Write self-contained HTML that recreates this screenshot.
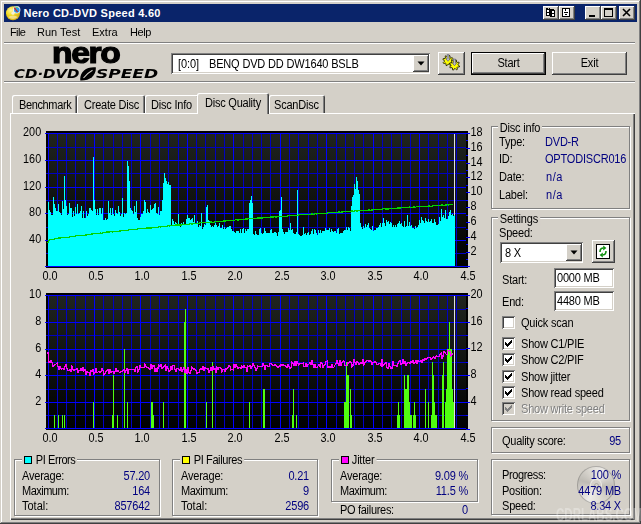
<!DOCTYPE html>
<html><head><meta charset="utf-8"><title>Nero CD-DVD Speed 4.60</title>
<style>
html,body{margin:0;padding:0;}
body{width:641px;height:524px;overflow:hidden;opacity:0.999;background:#d4d0c8;position:relative;font-family:"Liberation Sans",sans-serif;font-size:11px;color:#000;}
.a{position:absolute;}
.t{position:absolute;white-space:nowrap;line-height:13px;font-size:12px;letter-spacing:-0.22px;transform:scaleX(0.9167);transform-origin:0 0;}
.t.r{transform-origin:100% 0;}
.t.c{transform-origin:50% 0;}
.t.m{font-size:11px;transform:none;}
.v{color:#000080;}
.r{text-align:right;}
.raised{box-shadow:inset -1px -1px #404040,inset 1px 1px #fff,inset -2px -2px #808080,inset 2px 2px #d4d0c8;background:#d4d0c8;}
.sunken{box-shadow:inset 1px 1px #808080,inset -1px -1px #fff,inset 2px 2px #404040,inset -2px -2px #d4d0c8;background:#fff;}
.gb{position:absolute;border:1px solid #808080;box-shadow:1px 1px 0 #fff,inset 1px 1px 0 #fff;box-sizing:border-box;}
.lg{position:absolute;background:#d4d0c8;white-space:nowrap;line-height:13px;font-size:12px;letter-spacing:-0.22px;transform:scaleX(0.9167);transform-origin:0 0;}
.sep{position:absolute;height:1px;background:#808080;box-shadow:0 1px 0 #fff;}
.cb{position:absolute;width:13px;height:13px;box-shadow:inset 1px 1px #808080,inset -1px -1px #fff,inset 2px 2px #404040,inset -2px -2px #d4d0c8;background:#fff;}
.sq{position:absolute;width:8px;height:8px;border:1px solid #000;box-sizing:border-box;}
.capbtn{position:absolute;top:6px;width:16px;height:14px;}
.tab{position:absolute;top:95px;height:18px;background:#d4d0c8;border-radius:2px 2px 0 0;box-shadow:inset 1px 1px #fff,inset -1px 0 #404040,inset -2px 0 #808080;}
</style></head><body>
<!-- window frame -->
<div class="a" style="left:0;top:0;width:641px;height:524px;box-shadow:inset -1px -1px #404040,inset 1px 1px #d4d0c8,inset -2px -2px #808080,inset 2px 2px #fff;"></div>
<!-- title bar -->
<div class="a" style="left:4px;top:4px;width:633px;height:18px;background:#0a246a;"></div>
<svg class="a" style="left:5px;top:4px" width="18" height="18" viewBox="0 0 18 18"><defs><radialGradient id="gd" cx="0.35" cy="0.3" r="0.8"><stop offset="0" stop-color="#fff8a0"/><stop offset="0.45" stop-color="#f0d820"/><stop offset="1" stop-color="#c8a010"/></radialGradient></defs><circle cx="8" cy="9.2" r="7" fill="url(#gd)"/><path d="M3 13 Q8 10 13 13 Q8 17 3 13Z" fill="#f8e8b0" opacity="0.7"/><circle cx="8" cy="9.2" r="1.6" fill="#f4f0d8"/><circle cx="11.6" cy="5.8" r="3.8" fill="#f0f0f0"/><circle cx="11.8" cy="6" r="2.8" fill="#2898e8"/><path d="M9.2 3.6 L12.6 8" stroke="#d82010" stroke-width="1.2"/><path d="M10.2 3 L12.8 3.2" stroke="#60c040" stroke-width="1"/></svg>
<div class="t m" style="left:23.5px;top:7px;color:#fff;font-weight:bold;letter-spacing:0.26px;">Nero CD-DVD Speed 4.60</div>
<div class="capbtn raised" style="left:543px"></div>
<div class="capbtn raised" style="left:559px"></div>
<div class="capbtn raised" style="left:585px"></div>
<div class="capbtn raised" style="left:601px"></div>
<div class="capbtn raised" style="left:619px"></div>
<svg class="a" style="left:543px;top:6px" width="92" height="14" viewBox="0 0 92 14" shape-rendering="crispEdges"><rect x="3" y="2" width="4" height="8" fill="#000"/><rect x="5" y="2" width="1" height="1" fill="#d4d0c8"/><rect x="4" y="4" width="2" height="2" fill="#fff"/><rect x="4" y="7" width="2" height="2" fill="#fff"/><rect x="7" y="3" width="5" height="8" fill="#000"/><rect x="8" y="3" width="1" height="1" fill="#000"/><rect x="9" y="5" width="2" height="2" fill="#fff"/><rect x="9" y="8" width="2" height="2" fill="#fff"/><rect x="11" y="3" width="1" height="1" fill="#d4d0c8"/><rect x="19" y="2" width="8" height="9" fill="#000"/><rect x="20" y="3" width="1" height="7" fill="#fff"/><rect x="25" y="3" width="1" height="7" fill="#fff"/><rect x="21" y="3" width="4" height="3" fill="#fff"/><rect x="22" y="3" width="1" height="2" fill="#000"/><rect x="21" y="7" width="4" height="3" fill="#fff"/><rect x="22" y="8" width="2" height="1" fill="#000"/><rect x="46" y="9" width="6" height="2" fill="#000"/><rect x="61.5" y="3.5" width="8" height="7" fill="none" stroke="#000"/><rect x="61" y="2" width="9" height="2" fill="#000"/><path d="M80 3 L87 10 M87 3 L80 10" stroke="#000" stroke-width="1.6" shape-rendering="auto"/></svg>
<!-- menu -->
<div class="t m" style="left:10px;top:26px;letter-spacing:-0.6px;">File</div>
<div class="t m" style="left:37px;top:26px;letter-spacing:0px;">Run Test</div>
<div class="t m" style="left:92px;top:26px;letter-spacing:0px;">Extra</div>
<div class="t m" style="left:130px;top:26px;letter-spacing:-0.4px;">Help</div>
<div class="sep" style="left:4px;top:42px;width:631px;"></div>
<!-- logo -->
<div class="a" id="nero" style="left:52px;top:35px;font-size:29px;line-height:36px;font-weight:bold;letter-spacing:-1.2px;-webkit-text-stroke:1.2px #000;white-space:nowrap;transform-origin:0 0;transform:scaleX(1.16);">nero</div>
<div class="a" id="cdd" style="left:14px;top:68px;font-family:'DejaVu Sans',sans-serif;font-weight:bold;font-style:oblique;font-size:11.5px;line-height:12px;white-space:nowrap;transform-origin:0 0;transform:scaleX(1.3);letter-spacing:0px;">CD·DVD</div>
<svg class="a" style="left:80px;top:67px" width="16" height="14" viewBox="0 0 16 14"><path d="M0.3 13.5 C-0.5 5 6 -0.5 15.8 0.3 C16.5 8 10 14 0.3 13.5Z" fill="#000"/><path d="M3.5 11 C6 8 9 5 12.5 3.2" stroke="#d4d0c8" stroke-width="1.1" fill="none"/></svg>
<div class="a" id="spd" style="left:96px;top:68px;font-family:'DejaVu Sans',sans-serif;font-weight:bold;font-style:oblique;font-size:11.5px;line-height:12px;white-space:nowrap;transform-origin:0 0;transform:scaleX(1.48);letter-spacing:0px;">SPEED</div>
<!-- toolbar -->
<div class="a sunken" style="left:171px;top:53px;width:259px;height:21px;"></div>
<div class="t" style="left:178px;top:58px;letter-spacing:-0.1px;">[0:0]</div><div class="t" style="left:208.5px;top:58px;letter-spacing:-0.18px;">BENQ DVD DD DW1640 BSLB</div>
<div class="a raised" style="left:413px;top:55px;width:16px;height:17px;"></div>
<svg class="a" style="left:417px;top:61px" width="8" height="5"><path d="M0.5 0.5 L7.5 0.5 L4 4.5Z" fill="#000"/></svg>
<div class="a raised" style="left:438px;top:52px;width:27px;height:23px;"></div>
<svg class="a" style="left:438px;top:52px" width="27" height="23" viewBox="0 0 27 23"><polygon points="15.10,9.63 14.80,10.61 12.99,10.61 12.54,11.15 12.87,12.93 11.97,13.41 10.69,12.13 9.99,12.20 8.97,13.70 7.99,13.40 7.99,11.59 7.45,11.14 5.67,11.47 5.19,10.57 6.47,9.29 6.40,8.59 4.90,7.57 5.20,6.59 7.01,6.59 7.46,6.05 7.13,4.27 8.03,3.79 9.31,5.07 10.01,5.00 11.03,3.50 12.01,3.80 12.01,5.61 12.55,6.06 14.33,5.73 14.81,6.63 13.53,7.91 13.60,8.61" fill="#ffff00" stroke="#202000" stroke-width="0.9" stroke-linejoin="round"/><path d="M9.0 2.7 v4 h-1.2 l2.2 2.6 l2.2 -2.6 h-1.2 v-4z" fill="#b8b8c8" stroke="#505060" stroke-width="0.6"/><polygon points="21.60,14.03 21.30,15.01 19.49,15.01 19.04,15.55 19.37,17.33 18.47,17.81 17.19,16.53 16.49,16.60 15.47,18.10 14.49,17.80 14.49,15.99 13.95,15.54 12.17,15.87 11.69,14.97 12.97,13.69 12.90,12.99 11.40,11.97 11.70,10.99 13.51,10.99 13.96,10.45 13.63,8.67 14.53,8.19 15.81,9.47 16.51,9.40 17.53,7.90 18.51,8.20 18.51,10.01 19.05,10.46 20.83,10.13 21.31,11.03 20.03,12.31 20.10,13.01" fill="#ffff00" stroke="#202000" stroke-width="0.9" stroke-linejoin="round"/><path d="M15.5 7.1 v4 h-1.2 l2.2 2.6 l2.2 -2.6 h-1.2 v-4z" fill="#b8b8c8" stroke="#505060" stroke-width="0.6"/></svg>
<div class="a" style="left:471px;top:52px;width:75px;height:23px;background:#000;"></div>
<div class="a raised" style="left:472px;top:53px;width:73px;height:21px;"></div>
<div class="t c" style="left:471px;top:57px;width:75px;text-align:center;">Start</div>
<div class="a raised" style="left:552px;top:52px;width:75px;height:23px;"></div>
<div class="t c" style="left:552px;top:57px;width:75px;text-align:center;">Exit</div>
<div class="sep" style="left:4px;top:81px;width:631px;"></div>
<!-- tab panel -->
<div class="a" style="left:10px;top:113px;width:625px;height:407px;box-shadow:inset 1px 1px #fff,inset -1px -1px #404040,inset -2px -2px #808080;"></div>
<!-- tabs -->
<div class="tab" style="left:12px;width:65px;"></div><div class="t" style="left:19px;top:99px;letter-spacing:-0.4px;">Benchmark</div>
<div class="tab" style="left:77px;width:68px;"></div><div class="t" style="left:84px;top:99px;letter-spacing:-0.25px;">Create Disc</div>
<div class="tab" style="left:145px;width:54px;"></div><div class="t" style="left:151px;top:99px;">Disc Info</div>
<div class="tab" style="left:269px;width:56px;"></div><div class="t" style="left:274px;top:99px;">ScanDisc</div>
<div class="tab" style="left:197px;top:93px;width:72px;height:21px;"></div><div class="t" style="left:205px;top:97px;letter-spacing:-0.25px;">Disc Quality</div>
<svg id="chart" width="641" height="524" viewBox="0 0 641 524" style="position:absolute;left:0;top:0">
<defs><linearGradient id="bg" x1="0" y1="0" x2="0" y2="1"><stop offset="0" stop-color="#20241f"/><stop offset="0.5" stop-color="#101210"/><stop offset="1" stop-color="#000"/></linearGradient></defs>
<g shape-rendering="crispEdges">
<rect x="46" y="131" width="422" height="137" fill="#000"/>
<rect x="46" y="293" width="422" height="137" fill="#000"/>
<rect x="48" y="133" width="418" height="133" fill="url(#bg)"/>
<rect x="48" y="295" width="418" height="133" fill="url(#bg)"/>
<g fill="#0000c0"><rect x="57" y="133" width="1" height="133"/><rect x="66" y="133" width="1" height="133"/><rect x="75" y="133" width="1" height="133"/><rect x="85" y="133" width="1" height="133"/><rect x="103" y="133" width="1" height="133"/><rect x="113" y="133" width="1" height="133"/><rect x="122" y="133" width="1" height="133"/><rect x="131" y="133" width="1" height="133"/><rect x="150" y="133" width="1" height="133"/><rect x="159" y="133" width="1" height="133"/><rect x="168" y="133" width="1" height="133"/><rect x="178" y="133" width="1" height="133"/><rect x="196" y="133" width="1" height="133"/><rect x="205" y="133" width="1" height="133"/><rect x="215" y="133" width="1" height="133"/><rect x="224" y="133" width="1" height="133"/><rect x="243" y="133" width="1" height="133"/><rect x="252" y="133" width="1" height="133"/><rect x="261" y="133" width="1" height="133"/><rect x="270" y="133" width="1" height="133"/><rect x="289" y="133" width="1" height="133"/><rect x="298" y="133" width="1" height="133"/><rect x="308" y="133" width="1" height="133"/><rect x="317" y="133" width="1" height="133"/><rect x="336" y="133" width="1" height="133"/><rect x="345" y="133" width="1" height="133"/><rect x="354" y="133" width="1" height="133"/><rect x="363" y="133" width="1" height="133"/><rect x="382" y="133" width="1" height="133"/><rect x="391" y="133" width="1" height="133"/><rect x="401" y="133" width="1" height="133"/><rect x="410" y="133" width="1" height="133"/><rect x="428" y="133" width="1" height="133"/><rect x="438" y="133" width="1" height="133"/><rect x="447" y="133" width="1" height="133"/><rect x="456" y="133" width="1" height="133"/><rect x="46" y="147" width="420" height="1"/><rect x="46" y="173" width="420" height="1"/><rect x="46" y="200" width="420" height="1"/><rect x="46" y="227" width="420" height="1"/><rect x="46" y="253" width="420" height="1"/><rect x="57" y="295" width="1" height="133"/><rect x="66" y="295" width="1" height="133"/><rect x="75" y="295" width="1" height="133"/><rect x="85" y="295" width="1" height="133"/><rect x="103" y="295" width="1" height="133"/><rect x="113" y="295" width="1" height="133"/><rect x="122" y="295" width="1" height="133"/><rect x="131" y="295" width="1" height="133"/><rect x="150" y="295" width="1" height="133"/><rect x="159" y="295" width="1" height="133"/><rect x="168" y="295" width="1" height="133"/><rect x="178" y="295" width="1" height="133"/><rect x="196" y="295" width="1" height="133"/><rect x="205" y="295" width="1" height="133"/><rect x="215" y="295" width="1" height="133"/><rect x="224" y="295" width="1" height="133"/><rect x="243" y="295" width="1" height="133"/><rect x="252" y="295" width="1" height="133"/><rect x="261" y="295" width="1" height="133"/><rect x="270" y="295" width="1" height="133"/><rect x="289" y="295" width="1" height="133"/><rect x="298" y="295" width="1" height="133"/><rect x="308" y="295" width="1" height="133"/><rect x="317" y="295" width="1" height="133"/><rect x="336" y="295" width="1" height="133"/><rect x="345" y="295" width="1" height="133"/><rect x="354" y="295" width="1" height="133"/><rect x="363" y="295" width="1" height="133"/><rect x="382" y="295" width="1" height="133"/><rect x="391" y="295" width="1" height="133"/><rect x="401" y="295" width="1" height="133"/><rect x="410" y="295" width="1" height="133"/><rect x="428" y="295" width="1" height="133"/><rect x="438" y="295" width="1" height="133"/><rect x="447" y="295" width="1" height="133"/><rect x="456" y="295" width="1" height="133"/><rect x="46" y="309" width="420" height="1"/><rect x="46" y="335" width="420" height="1"/><rect x="46" y="362" width="420" height="1"/><rect x="46" y="389" width="420" height="1"/><rect x="46" y="415" width="420" height="1"/></g>
<g fill="#0000ff"><rect x="48" y="133" width="1" height="133"/><rect x="94" y="133" width="1" height="133"/><rect x="140" y="133" width="1" height="133"/><rect x="187" y="133" width="1" height="133"/><rect x="233" y="133" width="1" height="133"/><rect x="280" y="133" width="1" height="133"/><rect x="326" y="133" width="1" height="133"/><rect x="373" y="133" width="1" height="133"/><rect x="419" y="133" width="1" height="133"/><rect x="45" y="133" width="421" height="1"/><rect x="45" y="160" width="421" height="1"/><rect x="45" y="187" width="421" height="1"/><rect x="45" y="213" width="421" height="1"/><rect x="45" y="240" width="421" height="1"/><rect x="45" y="266" width="421" height="1"/><rect x="48" y="295" width="1" height="133"/><rect x="94" y="295" width="1" height="133"/><rect x="140" y="295" width="1" height="133"/><rect x="187" y="295" width="1" height="133"/><rect x="233" y="295" width="1" height="133"/><rect x="280" y="295" width="1" height="133"/><rect x="326" y="295" width="1" height="133"/><rect x="373" y="295" width="1" height="133"/><rect x="419" y="295" width="1" height="133"/><rect x="45" y="295" width="421" height="1"/><rect x="45" y="322" width="421" height="1"/><rect x="45" y="349" width="421" height="1"/><rect x="45" y="375" width="421" height="1"/><rect x="45" y="402" width="421" height="1"/><rect x="45" y="428" width="421" height="1"/><rect x="466" y="266" width="4" height="1"/><rect x="466" y="259" width="2" height="1"/><rect x="466" y="252" width="4" height="1"/><rect x="466" y="244" width="2" height="1"/><rect x="466" y="237" width="4" height="1"/><rect x="466" y="229" width="2" height="1"/><rect x="466" y="222" width="4" height="1"/><rect x="466" y="215" width="2" height="1"/><rect x="466" y="207" width="4" height="1"/><rect x="466" y="200" width="2" height="1"/><rect x="466" y="192" width="4" height="1"/><rect x="466" y="185" width="2" height="1"/><rect x="466" y="177" width="4" height="1"/><rect x="466" y="170" width="2" height="1"/><rect x="466" y="163" width="4" height="1"/><rect x="466" y="155" width="2" height="1"/><rect x="466" y="148" width="4" height="1"/><rect x="466" y="140" width="2" height="1"/><rect x="466" y="133" width="4" height="1"/><rect x="466" y="429" width="4" height="1"/><rect x="466" y="415" width="2" height="1"/><rect x="466" y="402" width="4" height="1"/><rect x="466" y="388" width="2" height="1"/><rect x="466" y="375" width="4" height="1"/><rect x="466" y="362" width="2" height="1"/><rect x="466" y="348" width="4" height="1"/><rect x="466" y="335" width="2" height="1"/><rect x="466" y="322" width="4" height="1"/><rect x="466" y="308" width="2" height="1"/><rect x="466" y="295" width="4" height="1"/></g>
<rect x="454" y="134" width="1" height="132" fill="#e0e0e0"/>
<rect x="454" y="296" width="1" height="132" fill="#e0e0e0"/>
<g fill="#00ffff"><rect x="48" y="202" width="1" height="64"/><rect x="49" y="210" width="1" height="56"/><rect x="50" y="212" width="1" height="54"/><rect x="51" y="215" width="1" height="51"/><rect x="52" y="215" width="1" height="51"/><rect x="53" y="197" width="1" height="69"/><rect x="54" y="204" width="1" height="62"/><rect x="55" y="208" width="1" height="58"/><rect x="56" y="211" width="1" height="55"/><rect x="57" y="211" width="1" height="55"/><rect x="58" y="204" width="1" height="62"/><rect x="59" y="212" width="1" height="54"/><rect x="60" y="213" width="1" height="53"/><rect x="61" y="215" width="1" height="51"/><rect x="62" y="201" width="1" height="65"/><rect x="63" y="209" width="1" height="57"/><rect x="64" y="176" width="1" height="90"/><rect x="65" y="200" width="1" height="66"/><rect x="66" y="206" width="1" height="60"/><rect x="67" y="215" width="1" height="51"/><rect x="68" y="214" width="1" height="52"/><rect x="69" y="203" width="1" height="63"/><rect x="70" y="208" width="1" height="58"/><rect x="71" y="208" width="1" height="58"/><rect x="72" y="217" width="1" height="49"/><rect x="73" y="211" width="1" height="55"/><rect x="74" y="216" width="1" height="50"/><rect x="75" y="207" width="1" height="59"/><rect x="76" y="214" width="1" height="52"/><rect x="77" y="204" width="1" height="62"/><rect x="78" y="214" width="1" height="52"/><rect x="79" y="213" width="1" height="53"/><rect x="80" y="211" width="1" height="55"/><rect x="81" y="206" width="1" height="60"/><rect x="82" y="218" width="1" height="48"/><rect x="83" y="211" width="1" height="55"/><rect x="84" y="218" width="1" height="48"/><rect x="85" y="218" width="1" height="48"/><rect x="86" y="211" width="1" height="55"/><rect x="87" y="216" width="1" height="50"/><rect x="88" y="214" width="1" height="52"/><rect x="89" y="208" width="1" height="58"/><rect x="90" y="208" width="1" height="58"/><rect x="91" y="210" width="1" height="56"/><rect x="92" y="211" width="1" height="55"/><rect x="93" y="157" width="1" height="109"/><rect x="94" y="200" width="1" height="66"/><rect x="95" y="209" width="1" height="57"/><rect x="96" y="215" width="1" height="51"/><rect x="97" y="209" width="1" height="57"/><rect x="98" y="215" width="1" height="51"/><rect x="99" y="208" width="1" height="58"/><rect x="100" y="208" width="1" height="58"/><rect x="101" y="214" width="1" height="52"/><rect x="102" y="208" width="1" height="58"/><rect x="103" y="220" width="1" height="46"/><rect x="104" y="220" width="1" height="46"/><rect x="105" y="218" width="1" height="48"/><rect x="106" y="220" width="1" height="46"/><rect x="107" y="219" width="1" height="47"/><rect x="108" y="201" width="1" height="65"/><rect x="109" y="213" width="1" height="53"/><rect x="110" y="208" width="1" height="58"/><rect x="111" y="215" width="1" height="51"/><rect x="112" y="208" width="1" height="58"/><rect x="113" y="214" width="1" height="52"/><rect x="114" y="216" width="1" height="50"/><rect x="115" y="210" width="1" height="56"/><rect x="116" y="213" width="1" height="53"/><rect x="117" y="214" width="1" height="52"/><rect x="118" y="206" width="1" height="60"/><rect x="119" y="212" width="1" height="54"/><rect x="120" y="216" width="1" height="50"/><rect x="121" y="214" width="1" height="52"/><rect x="122" y="198" width="1" height="68"/><rect x="123" y="217" width="1" height="49"/><rect x="124" y="213" width="1" height="53"/><rect x="125" y="214" width="1" height="52"/><rect x="126" y="213" width="1" height="53"/><rect x="127" y="161" width="1" height="105"/><rect x="128" y="166" width="1" height="100"/><rect x="129" y="181" width="1" height="85"/><rect x="130" y="208" width="1" height="58"/><rect x="131" y="210" width="1" height="56"/><rect x="132" y="211" width="1" height="55"/><rect x="133" y="214" width="1" height="52"/><rect x="134" y="206" width="1" height="60"/><rect x="135" y="212" width="1" height="54"/><rect x="136" y="201" width="1" height="65"/><rect x="137" y="218" width="1" height="48"/><rect x="138" y="220" width="1" height="46"/><rect x="139" y="220" width="1" height="46"/><rect x="140" y="217" width="1" height="49"/><rect x="141" y="214" width="1" height="52"/><rect x="142" y="214" width="1" height="52"/><rect x="143" y="211" width="1" height="55"/><rect x="144" y="200" width="1" height="66"/><rect x="145" y="202" width="1" height="64"/><rect x="146" y="213" width="1" height="53"/><rect x="147" y="209" width="1" height="57"/><rect x="148" y="212" width="1" height="54"/><rect x="149" y="213" width="1" height="53"/><rect x="150" y="205" width="1" height="61"/><rect x="151" y="210" width="1" height="56"/><rect x="152" y="209" width="1" height="57"/><rect x="153" y="208" width="1" height="58"/><rect x="154" y="204" width="1" height="62"/><rect x="155" y="203" width="1" height="63"/><rect x="156" y="213" width="1" height="53"/><rect x="157" y="214" width="1" height="52"/><rect x="158" y="207" width="1" height="59"/><rect x="159" y="215" width="1" height="51"/><rect x="160" y="211" width="1" height="55"/><rect x="161" y="211" width="1" height="55"/><rect x="162" y="200" width="1" height="66"/><rect x="163" y="183" width="1" height="83"/><rect x="164" y="173" width="1" height="93"/><rect x="165" y="178" width="1" height="88"/><rect x="166" y="181" width="1" height="85"/><rect x="167" y="184" width="1" height="82"/><rect x="168" y="182" width="1" height="84"/><rect x="169" y="185" width="1" height="81"/><rect x="170" y="185" width="1" height="81"/><rect x="171" y="225" width="1" height="41"/><rect x="172" y="219" width="1" height="47"/><rect x="173" y="221" width="1" height="45"/><rect x="174" y="224" width="1" height="42"/><rect x="175" y="222" width="1" height="44"/><rect x="176" y="223" width="1" height="43"/><rect x="177" y="226" width="1" height="40"/><rect x="178" y="214" width="1" height="52"/><rect x="179" y="225" width="1" height="41"/><rect x="180" y="227" width="1" height="39"/><rect x="181" y="223" width="1" height="43"/><rect x="182" y="225" width="1" height="41"/><rect x="183" y="222" width="1" height="44"/><rect x="184" y="224" width="1" height="42"/><rect x="185" y="224" width="1" height="42"/><rect x="186" y="219" width="1" height="47"/><rect x="187" y="215" width="1" height="51"/><rect x="188" y="218" width="1" height="48"/><rect x="189" y="218" width="1" height="48"/><rect x="190" y="220" width="1" height="46"/><rect x="191" y="219" width="1" height="47"/><rect x="192" y="218" width="1" height="48"/><rect x="193" y="222" width="1" height="44"/><rect x="194" y="215" width="1" height="51"/><rect x="195" y="224" width="1" height="42"/><rect x="196" y="224" width="1" height="42"/><rect x="197" y="221" width="1" height="45"/><rect x="198" y="227" width="1" height="39"/><rect x="199" y="225" width="1" height="41"/><rect x="200" y="226" width="1" height="40"/><rect x="201" y="213" width="1" height="53"/><rect x="202" y="229" width="1" height="37"/><rect x="203" y="227" width="1" height="39"/><rect x="204" y="224" width="1" height="42"/><rect x="205" y="225" width="1" height="41"/><rect x="206" y="207" width="1" height="59"/><rect x="207" y="205" width="1" height="61"/><rect x="208" y="220" width="1" height="46"/><rect x="209" y="221" width="1" height="45"/><rect x="210" y="225" width="1" height="41"/><rect x="211" y="227" width="1" height="39"/><rect x="212" y="226" width="1" height="40"/><rect x="213" y="227" width="1" height="39"/><rect x="214" y="225" width="1" height="41"/><rect x="215" y="223" width="1" height="43"/><rect x="216" y="225" width="1" height="41"/><rect x="217" y="227" width="1" height="39"/><rect x="218" y="226" width="1" height="40"/><rect x="219" y="223" width="1" height="43"/><rect x="220" y="228" width="1" height="38"/><rect x="221" y="228" width="1" height="38"/><rect x="222" y="225" width="1" height="41"/><rect x="223" y="229" width="1" height="37"/><rect x="224" y="227" width="1" height="39"/><rect x="225" y="229" width="1" height="37"/><rect x="226" y="228" width="1" height="38"/><rect x="227" y="227" width="1" height="39"/><rect x="228" y="227" width="1" height="39"/><rect x="229" y="226" width="1" height="40"/><rect x="230" y="226" width="1" height="40"/><rect x="231" y="229" width="1" height="37"/><rect x="232" y="231" width="1" height="35"/><rect x="233" y="231" width="1" height="35"/><rect x="234" y="232" width="1" height="34"/><rect x="235" y="233" width="1" height="33"/><rect x="236" y="231" width="1" height="35"/><rect x="237" y="231" width="1" height="35"/><rect x="238" y="231" width="1" height="35"/><rect x="239" y="233" width="1" height="33"/><rect x="240" y="229" width="1" height="37"/><rect x="241" y="233" width="1" height="33"/><rect x="242" y="229" width="1" height="37"/><rect x="243" y="228" width="1" height="38"/><rect x="244" y="233" width="1" height="33"/><rect x="245" y="229" width="1" height="37"/><rect x="246" y="231" width="1" height="35"/><rect x="247" y="229" width="1" height="37"/><rect x="248" y="229" width="1" height="37"/><rect x="249" y="203" width="1" height="63"/><rect x="250" y="200" width="1" height="66"/><rect x="251" y="196" width="1" height="70"/><rect x="252" y="203" width="1" height="63"/><rect x="253" y="234" width="1" height="32"/><rect x="254" y="235" width="1" height="31"/><rect x="255" y="231" width="1" height="35"/><rect x="256" y="234" width="1" height="32"/><rect x="257" y="235" width="1" height="31"/><rect x="258" y="235" width="1" height="31"/><rect x="259" y="229" width="1" height="37"/><rect x="260" y="228" width="1" height="38"/><rect x="261" y="233" width="1" height="33"/><rect x="262" y="234" width="1" height="32"/><rect x="263" y="233" width="1" height="33"/><rect x="264" y="228" width="1" height="38"/><rect x="265" y="231" width="1" height="35"/><rect x="266" y="233" width="1" height="33"/><rect x="267" y="233" width="1" height="33"/><rect x="268" y="233" width="1" height="33"/><rect x="269" y="233" width="1" height="33"/><rect x="270" y="230" width="1" height="36"/><rect x="271" y="229" width="1" height="37"/><rect x="272" y="233" width="1" height="33"/><rect x="273" y="233" width="1" height="33"/><rect x="274" y="232" width="1" height="34"/><rect x="275" y="232" width="1" height="34"/><rect x="276" y="233" width="1" height="33"/><rect x="277" y="236" width="1" height="30"/><rect x="278" y="232" width="1" height="34"/><rect x="279" y="211" width="1" height="55"/><rect x="280" y="210" width="1" height="56"/><rect x="281" y="197" width="1" height="69"/><rect x="282" y="229" width="1" height="37"/><rect x="283" y="232" width="1" height="34"/><rect x="284" y="234" width="1" height="32"/><rect x="285" y="232" width="1" height="34"/><rect x="286" y="232" width="1" height="34"/><rect x="287" y="232" width="1" height="34"/><rect x="288" y="228" width="1" height="38"/><rect x="289" y="230" width="1" height="36"/><rect x="290" y="223" width="1" height="43"/><rect x="291" y="230" width="1" height="36"/><rect x="292" y="229" width="1" height="37"/><rect x="293" y="233" width="1" height="33"/><rect x="294" y="234" width="1" height="32"/><rect x="295" y="234" width="1" height="32"/><rect x="296" y="232" width="1" height="34"/><rect x="297" y="190" width="1" height="76"/><rect x="298" y="234" width="1" height="32"/><rect x="299" y="235" width="1" height="31"/><rect x="300" y="236" width="1" height="30"/><rect x="301" y="236" width="1" height="30"/><rect x="302" y="235" width="1" height="31"/><rect x="303" y="227" width="1" height="39"/><rect x="304" y="234" width="1" height="32"/><rect x="305" y="233" width="1" height="33"/><rect x="306" y="235" width="1" height="31"/><rect x="307" y="233" width="1" height="33"/><rect x="308" y="232" width="1" height="34"/><rect x="309" y="235" width="1" height="31"/><rect x="310" y="234" width="1" height="32"/><rect x="311" y="231" width="1" height="35"/><rect x="312" y="229" width="1" height="37"/><rect x="313" y="234" width="1" height="32"/><rect x="314" y="229" width="1" height="37"/><rect x="315" y="230" width="1" height="36"/><rect x="316" y="233" width="1" height="33"/><rect x="317" y="235" width="1" height="31"/><rect x="318" y="230" width="1" height="36"/><rect x="319" y="233" width="1" height="33"/><rect x="320" y="230" width="1" height="36"/><rect x="321" y="233" width="1" height="33"/><rect x="322" y="231" width="1" height="35"/><rect x="323" y="231" width="1" height="35"/><rect x="324" y="231" width="1" height="35"/><rect x="325" y="228" width="1" height="38"/><rect x="326" y="230" width="1" height="36"/><rect x="327" y="230" width="1" height="36"/><rect x="328" y="230" width="1" height="36"/><rect x="329" y="228" width="1" height="38"/><rect x="330" y="232" width="1" height="34"/><rect x="331" y="229" width="1" height="37"/><rect x="332" y="231" width="1" height="35"/><rect x="333" y="232" width="1" height="34"/><rect x="334" y="231" width="1" height="35"/><rect x="335" y="231" width="1" height="35"/><rect x="336" y="233" width="1" height="33"/><rect x="337" y="229" width="1" height="37"/><rect x="338" y="228" width="1" height="38"/><rect x="339" y="234" width="1" height="32"/><rect x="340" y="233" width="1" height="33"/><rect x="341" y="233" width="1" height="33"/><rect x="342" y="233" width="1" height="33"/><rect x="343" y="231" width="1" height="35"/><rect x="344" y="230" width="1" height="36"/><rect x="345" y="230" width="1" height="36"/><rect x="346" y="227" width="1" height="39"/><rect x="347" y="230" width="1" height="36"/><rect x="348" y="227" width="1" height="39"/><rect x="349" y="228" width="1" height="38"/><rect x="350" y="231" width="1" height="35"/><rect x="351" y="206" width="1" height="60"/><rect x="352" y="197" width="1" height="69"/><rect x="353" y="195" width="1" height="71"/><rect x="354" y="184" width="1" height="82"/><rect x="355" y="189" width="1" height="77"/><rect x="356" y="177" width="1" height="89"/><rect x="357" y="181" width="1" height="85"/><rect x="358" y="190" width="1" height="76"/><rect x="359" y="194" width="1" height="72"/><rect x="360" y="223" width="1" height="43"/><rect x="361" y="227" width="1" height="39"/><rect x="362" y="229" width="1" height="37"/><rect x="363" y="226" width="1" height="40"/><rect x="364" y="228" width="1" height="38"/><rect x="365" y="224" width="1" height="42"/><rect x="366" y="227" width="1" height="39"/><rect x="367" y="225" width="1" height="41"/><rect x="368" y="223" width="1" height="43"/><rect x="369" y="228" width="1" height="38"/><rect x="370" y="229" width="1" height="37"/><rect x="371" y="230" width="1" height="36"/><rect x="372" y="226" width="1" height="40"/><rect x="373" y="231" width="1" height="35"/><rect x="374" y="230" width="1" height="36"/><rect x="375" y="230" width="1" height="36"/><rect x="376" y="228" width="1" height="38"/><rect x="377" y="228" width="1" height="38"/><rect x="378" y="227" width="1" height="39"/><rect x="379" y="225" width="1" height="41"/><rect x="380" y="223" width="1" height="43"/><rect x="381" y="227" width="1" height="39"/><rect x="382" y="223" width="1" height="43"/><rect x="383" y="218" width="1" height="48"/><rect x="384" y="223" width="1" height="43"/><rect x="385" y="226" width="1" height="40"/><rect x="386" y="220" width="1" height="46"/><rect x="387" y="222" width="1" height="44"/><rect x="388" y="221" width="1" height="45"/><rect x="389" y="224" width="1" height="42"/><rect x="390" y="222" width="1" height="44"/><rect x="391" y="223" width="1" height="43"/><rect x="392" y="227" width="1" height="39"/><rect x="393" y="225" width="1" height="41"/><rect x="394" y="227" width="1" height="39"/><rect x="395" y="225" width="1" height="41"/><rect x="396" y="227" width="1" height="39"/><rect x="397" y="224" width="1" height="42"/><rect x="398" y="223" width="1" height="43"/><rect x="399" y="221" width="1" height="45"/><rect x="400" y="224" width="1" height="42"/><rect x="401" y="223" width="1" height="43"/><rect x="402" y="226" width="1" height="40"/><rect x="403" y="227" width="1" height="39"/><rect x="404" y="221" width="1" height="45"/><rect x="405" y="227" width="1" height="39"/><rect x="406" y="226" width="1" height="40"/><rect x="407" y="215" width="1" height="51"/><rect x="408" y="226" width="1" height="40"/><rect x="409" y="222" width="1" height="44"/><rect x="410" y="226" width="1" height="40"/><rect x="411" y="225" width="1" height="41"/><rect x="412" y="228" width="1" height="38"/><rect x="413" y="228" width="1" height="38"/><rect x="414" y="229" width="1" height="37"/><rect x="415" y="226" width="1" height="40"/><rect x="416" y="228" width="1" height="38"/><rect x="417" y="227" width="1" height="39"/><rect x="418" y="225" width="1" height="41"/><rect x="419" y="220" width="1" height="46"/><rect x="420" y="223" width="1" height="43"/><rect x="421" y="217" width="1" height="49"/><rect x="422" y="220" width="1" height="46"/><rect x="423" y="221" width="1" height="45"/><rect x="424" y="223" width="1" height="43"/><rect x="425" y="218" width="1" height="48"/><rect x="426" y="221" width="1" height="45"/><rect x="427" y="222" width="1" height="44"/><rect x="428" y="219" width="1" height="47"/><rect x="429" y="222" width="1" height="44"/><rect x="430" y="221" width="1" height="45"/><rect x="431" y="219" width="1" height="47"/><rect x="432" y="223" width="1" height="43"/><rect x="433" y="223" width="1" height="43"/><rect x="434" y="219" width="1" height="47"/><rect x="435" y="222" width="1" height="44"/><rect x="436" y="225" width="1" height="41"/><rect x="437" y="225" width="1" height="41"/><rect x="438" y="224" width="1" height="42"/><rect x="439" y="217" width="1" height="49"/><rect x="440" y="221" width="1" height="45"/><rect x="441" y="209" width="1" height="57"/><rect x="442" y="217" width="1" height="49"/><rect x="443" y="215" width="1" height="51"/><rect x="444" y="218" width="1" height="48"/><rect x="445" y="210" width="1" height="56"/><rect x="446" y="219" width="1" height="47"/><rect x="447" y="219" width="1" height="47"/><rect x="448" y="216" width="1" height="50"/><rect x="449" y="212" width="1" height="54"/><rect x="450" y="210" width="1" height="56"/><rect x="451" y="215" width="1" height="51"/><rect x="452" y="214" width="1" height="52"/><rect x="453" y="216" width="1" height="50"/><rect x="454" y="215" width="1" height="51"/></g>
<g fill="#50ff10"><rect x="54" y="415" width="1" height="13"/><rect x="58" y="415" width="1" height="13"/><rect x="62" y="415" width="1" height="13"/><rect x="64" y="415" width="1" height="13"/><rect x="93" y="402" width="1" height="26"/><rect x="112" y="415" width="1" height="13"/><rect x="113" y="375" width="1" height="53"/><rect x="117" y="415" width="1" height="13"/><rect x="124" y="349" width="1" height="79"/><rect x="127" y="402" width="1" height="26"/><rect x="151" y="402" width="1" height="26"/><rect x="152" y="402" width="1" height="26"/><rect x="153" y="415" width="1" height="13"/><rect x="163" y="402" width="1" height="26"/><rect x="184" y="322" width="1" height="106"/><rect x="185" y="309" width="1" height="119"/><rect x="206" y="402" width="1" height="26"/><rect x="212" y="362" width="1" height="66"/><rect x="249" y="402" width="1" height="26"/><rect x="263" y="389" width="1" height="39"/><rect x="264" y="389" width="1" height="39"/><rect x="292" y="415" width="1" height="13"/><rect x="293" y="389" width="1" height="39"/><rect x="296" y="415" width="1" height="13"/><rect x="344" y="402" width="1" height="26"/><rect x="345" y="402" width="1" height="26"/><rect x="346" y="362" width="1" height="66"/><rect x="347" y="375" width="1" height="53"/><rect x="348" y="375" width="1" height="53"/><rect x="350" y="389" width="1" height="39"/><rect x="351" y="415" width="1" height="13"/><rect x="397" y="415" width="1" height="13"/><rect x="398" y="402" width="1" height="26"/><rect x="399" y="415" width="1" height="13"/><rect x="404" y="375" width="1" height="53"/><rect x="405" y="389" width="1" height="39"/><rect x="406" y="389" width="1" height="39"/><rect x="407" y="375" width="1" height="53"/><rect x="408" y="375" width="1" height="53"/><rect x="409" y="402" width="1" height="26"/><rect x="410" y="415" width="1" height="13"/><rect x="411" y="415" width="1" height="13"/><rect x="413" y="415" width="1" height="13"/><rect x="414" y="402" width="1" height="26"/><rect x="415" y="415" width="1" height="13"/><rect x="425" y="389" width="1" height="39"/><rect x="428" y="402" width="1" height="26"/><rect x="431" y="415" width="1" height="13"/><rect x="432" y="362" width="1" height="66"/><rect x="433" y="375" width="1" height="53"/><rect x="434" y="402" width="1" height="26"/><rect x="435" y="415" width="1" height="13"/><rect x="436" y="415" width="1" height="13"/><rect x="442" y="375" width="1" height="53"/><rect x="443" y="362" width="1" height="66"/><rect x="445" y="402" width="1" height="26"/><rect x="446" y="389" width="1" height="39"/><rect x="447" y="349" width="1" height="79"/><rect x="448" y="349" width="1" height="79"/><rect x="449" y="322" width="1" height="106"/><rect x="450" y="349" width="1" height="79"/><rect x="451" y="349" width="1" height="79"/><rect x="452" y="389" width="1" height="39"/><rect x="453" y="402" width="1" height="26"/></g>
</g>
<path d="M48.0,242.9 L49.5,239.6 L51.0,239.3 L52.5,239.3 L54.0,239.1 L55.5,238.6 L57.0,238.6 L58.5,238.0 L60.0,238.1 L61.5,237.8 L63.0,237.8 L64.5,237.3 L66.0,237.6 L67.5,237.3 L69.0,237.2 L70.5,236.6 L72.0,236.4 L73.5,236.5 L75.0,236.2 L76.5,235.8 L78.0,235.7 L79.5,235.8 L81.0,235.6 L82.5,235.4 L84.0,235.3 L85.5,234.9 L87.0,234.9 L88.5,234.2 L90.0,234.4 L91.5,234.1 L93.0,233.9 L94.5,233.6 L96.0,233.4 L97.5,233.5 L99.0,233.4 L100.5,233.1 L102.0,233.2 L103.5,232.8 L105.0,232.5 L106.5,232.1 L108.0,232.1 L109.5,232.0 L111.0,231.8 L112.5,232.0 L114.0,231.7 L115.5,231.5 L117.0,231.2 L118.5,231.3 L120.0,231.0 L121.5,230.8 L123.0,230.4 L124.5,230.2 L126.0,230.2 L127.5,230.3 L129.0,229.8 L130.5,229.6 L132.0,229.6 L133.5,229.6 L135.0,229.3 L136.5,229.4 L138.0,228.9 L139.5,228.6 L141.0,228.7 L142.5,228.4 L144.0,228.2 L145.5,228.4 L147.0,227.9 L148.5,227.9 L150.0,228.0 L151.5,227.9 L153.0,227.7 L154.5,227.3 L156.0,227.1 L157.5,227.2 L159.0,226.7 L160.5,226.9 L162.0,226.7 L163.5,226.7 L165.0,226.1 L166.5,226.4 L168.0,225.8 L169.5,225.9 L171.0,225.8 L172.5,225.6 L174.0,225.6 L175.5,225.1 L177.0,224.9 L178.5,224.9 L180.0,224.9 L181.5,225.0 L183.0,224.5 L184.5,224.7 L186.0,224.2 L187.5,224.4 L189.0,224.1 L190.5,223.8 L192.0,224.0 L193.5,223.7 L195.0,223.8 L196.5,223.7 L198.0,223.5 L199.5,222.9 L201.0,222.8 L202.5,222.8 L204.0,222.9 L205.5,222.5 L207.0,222.4 L208.5,222.5 L210.0,222.2 L211.5,221.9 L213.0,222.3 L214.5,222.0 L216.0,221.8 L217.5,221.8 L219.0,221.5 L220.5,221.3 L222.0,221.4 L223.5,221.1 L225.0,221.1 L226.5,220.8 L228.0,220.8 L229.5,220.5 L231.0,220.7 L232.5,220.2 L234.0,220.4 L235.5,219.8 L237.0,219.9 L238.5,219.9 L240.0,219.8 L241.5,219.5 L243.0,219.4 L244.5,219.2 L246.0,219.1 L247.5,219.1 L249.0,218.7 L250.5,218.7 L252.0,218.5 L253.5,218.7 L255.0,218.5 L256.5,218.3 L258.0,218.0 L259.5,218.1 L261.0,218.0 L262.5,217.9 L264.0,217.5 L265.5,217.8 L267.0,217.8 L268.5,217.3 L270.0,217.1 L271.5,217.1 L273.0,217.0 L274.5,216.8 L276.0,217.0 L277.5,216.7 L279.0,216.9 L280.5,216.7 L282.0,216.4 L283.5,216.3 L285.0,216.2 L286.5,216.3 L288.0,215.8 L289.5,215.8 L291.0,215.8 L292.5,215.7 L294.0,215.5 L295.5,215.5 L297.0,215.5 L298.5,214.9 L300.0,214.7 L301.5,214.8 L303.0,214.6 L304.5,214.7 L306.0,214.4 L307.5,214.6 L309.0,214.2 L310.5,214.2 L312.0,213.9 L313.5,214.3 L315.0,213.7 L316.5,214.0 L318.0,213.7 L319.5,213.3 L321.0,213.8 L322.5,213.5 L324.0,213.4 L325.5,213.2 L327.0,213.3 L328.5,212.7 L330.0,212.6 L331.5,212.8 L333.0,212.7 L334.5,212.4 L336.0,212.7 L337.5,212.6 L339.0,211.9 L340.5,212.2 L342.0,212.0 L343.5,211.6 L345.0,211.5 L346.5,211.7 L348.0,211.7 L349.5,211.6 L351.0,211.1 L352.5,211.0 L354.0,211.3 L355.5,210.8 L357.0,211.0 L358.5,210.8 L360.0,210.9 L361.5,210.4 L363.0,210.2 L364.5,210.6 L366.0,210.2 L367.5,210.4 L369.0,209.9 L370.5,210.2 L372.0,210.1 L373.5,209.6 L375.0,209.8 L376.5,209.3 L378.0,209.3 L379.5,209.2 L381.0,209.5 L382.5,209.0 L384.0,208.8 L385.5,209.0 L387.0,209.1 L388.5,208.9 L390.0,208.8 L391.5,208.4 L393.0,208.6 L394.5,208.6 L396.0,208.4 L397.5,208.1 L399.0,207.9 L400.5,208.0 L402.0,207.8 L403.5,207.5 L405.0,207.6 L406.5,207.7 L408.0,207.6 L409.5,207.1 L411.0,207.2 L412.5,207.3 L414.0,207.0 L415.5,207.2 L417.0,206.6 L418.5,206.8 L420.0,206.7 L421.5,206.6 L423.0,206.8 L424.5,206.3 L426.0,206.4 L427.5,206.4 L429.0,205.9 L430.5,206.3 L432.0,206.1 L433.5,205.7 L435.0,205.9 L436.5,205.8 L438.0,205.5 L439.5,205.6 L441.0,205.1 L442.5,205.0 L444.0,205.4 L445.5,205.1 L447.0,204.8 L448.5,205.0 L450.0,204.5 L451.5,204.7 L453.0,204.8" fill="none" stroke="#00d400" stroke-width="1.25" shape-rendering="crispEdges"/>
<path d="M48.0,352.2 L49.0,362.2 L50.0,362.2 L51.0,360.8 L52.0,362.8 L53.0,366.4 L54.0,365.1 L55.0,364.8 L56.0,364.0 L57.0,363.1 L58.0,366.8 L59.0,369.7 L60.0,366.4 L61.0,368.9 L62.0,369.0 L63.0,368.2 L64.0,369.5 L65.0,366.4 L66.0,364.8 L67.0,368.2 L68.0,370.1 L69.0,370.5 L70.0,369.4 L71.0,371.2 L72.0,366.4 L73.0,369.1 L74.0,370.3 L75.0,369.8 L76.0,369.7 L77.0,368.6 L78.0,372.4 L79.0,370.3 L80.0,370.5 L81.0,368.9 L82.0,370.5 L83.0,367.3 L84.0,370.9 L85.0,369.6 L86.0,374.9 L87.0,371.8 L88.0,373.0 L89.0,372.5 L90.0,375.2 L91.0,370.9 L92.0,371.6 L93.0,369.8 L94.0,374.1 L95.0,372.9 L96.0,368.0 L97.0,372.5 L98.0,372.0 L99.0,371.1 L100.0,372.9 L101.0,371.2 L102.0,368.9 L103.0,370.4 L104.0,374.8 L105.0,373.2 L106.0,371.5 L107.0,370.7 L108.0,369.6 L109.0,374.2 L110.0,369.9 L111.0,372.1 L112.0,371.5 L113.0,371.3 L114.0,373.9 L115.0,371.4 L116.0,368.3 L117.0,371.3 L118.0,370.6 L119.0,372.0 L120.0,372.6 L121.0,371.5 L122.0,371.2 L123.0,370.1 L124.0,369.5 L125.0,372.6 L126.0,370.4 L127.0,368.8 L128.0,374.3 L129.0,369.4 L130.0,369.9 L131.0,369.1 L132.0,369.8 L133.0,369.0 L134.0,369.8 L135.0,371.8 L136.0,367.2 L137.0,366.4 L138.0,371.8 L139.0,369.6 L140.0,365.4 L141.0,367.2 L142.0,367.5 L143.0,367.5 L144.0,367.6 L145.0,364.1 L146.0,366.3 L147.0,367.4 L148.0,367.4 L149.0,368.7 L150.0,369.4 L151.0,364.4 L152.0,369.2 L153.0,365.6 L154.0,365.6 L155.0,371.4 L156.0,368.9 L157.0,371.5 L158.0,368.0 L159.0,365.0 L160.0,366.8 L161.0,364.8 L162.0,368.2 L163.0,367.5 L164.0,366.5 L165.0,365.3 L166.0,370.4 L167.0,366.5 L168.0,368.5 L169.0,371.4 L170.0,370.7 L171.0,366.9 L172.0,369.5 L173.0,365.8 L174.0,365.4 L175.0,369.2 L176.0,371.6 L177.0,368.8 L178.0,368.3 L179.0,369.9 L180.0,370.3 L181.0,367.6 L182.0,371.5 L183.0,370.1 L184.0,367.0 L185.0,372.2 L186.0,369.7 L187.0,373.5 L188.0,367.2 L189.0,372.4 L190.0,373.8 L191.0,370.2 L192.0,367.1 L193.0,369.0 L194.0,369.0 L195.0,369.4 L196.0,370.6 L197.0,373.2 L198.0,373.0 L199.0,372.6 L200.0,369.4 L201.0,368.1 L202.0,369.5 L203.0,366.2 L204.0,370.2 L205.0,367.9 L206.0,368.8 L207.0,368.4 L208.0,368.9 L209.0,372.3 L210.0,370.9 L211.0,367.0 L212.0,371.0 L213.0,366.1 L214.0,369.3 L215.0,368.5 L216.0,372.7 L217.0,367.0 L218.0,369.3 L219.0,367.7 L220.0,367.7 L221.0,368.7 L222.0,371.9 L223.0,369.2 L224.0,369.6 L225.0,371.5 L226.0,368.2 L227.0,369.1 L228.0,367.9 L229.0,365.6 L230.0,366.0 L231.0,369.8 L232.0,369.3 L233.0,369.8 L234.0,364.7 L235.0,367.8 L236.0,364.6 L237.0,366.2 L238.0,368.4 L239.0,367.2 L240.0,367.8 L241.0,368.6 L242.0,366.0 L243.0,367.7 L244.0,365.4 L245.0,367.8 L246.0,367.2 L247.0,371.4 L248.0,366.0 L249.0,366.5 L250.0,365.6 L251.0,368.8 L252.0,366.6 L253.0,363.9 L254.0,365.3 L255.0,367.3 L256.0,370.6 L257.0,369.1 L258.0,366.0 L259.0,366.7 L260.0,366.8 L261.0,366.8 L262.0,366.7 L263.0,363.7 L264.0,365.5 L265.0,370.1 L266.0,365.4 L267.0,365.9 L268.0,366.4 L269.0,366.7 L270.0,363.8 L271.0,363.3 L272.0,364.2 L273.0,365.3 L274.0,366.0 L275.0,364.2 L276.0,365.2 L277.0,366.3 L278.0,367.5 L279.0,366.2 L280.0,366.1 L281.0,364.9 L282.0,365.7 L283.0,364.2 L284.0,365.5 L285.0,365.6 L286.0,366.3 L287.0,367.3 L288.0,364.3 L289.0,366.8 L290.0,368.3 L291.0,367.6 L292.0,362.0 L293.0,363.7 L294.0,365.4 L295.0,361.7 L296.0,365.5 L297.0,361.7 L298.0,363.6 L299.0,365.1 L300.0,363.8 L301.0,363.8 L302.0,363.5 L303.0,363.0 L304.0,366.3 L305.0,366.3 L306.0,363.6 L307.0,366.6 L308.0,364.5 L309.0,364.0 L310.0,362.2 L311.0,364.3 L312.0,360.7 L313.0,364.6 L314.0,367.2 L315.0,364.4 L316.0,367.6 L317.0,367.6 L318.0,366.0 L319.0,364.4 L320.0,366.9 L321.0,363.0 L322.0,363.2 L323.0,367.6 L324.0,365.8 L325.0,364.4 L326.0,361.5 L327.0,361.0 L328.0,367.2 L329.0,367.0 L330.0,367.1 L331.0,367.1 L332.0,364.2 L333.0,367.6 L334.0,367.0 L335.0,365.0 L336.0,363.8 L337.0,360.4 L338.0,363.8 L339.0,365.2 L340.0,360.3 L341.0,365.2 L342.0,362.5 L343.0,361.0 L344.0,361.2 L345.0,365.6 L346.0,365.9 L347.0,365.4 L348.0,363.0 L349.0,362.8 L350.0,361.0 L351.0,362.2 L352.0,366.8 L353.0,365.3 L354.0,359.5 L355.0,362.4 L356.0,364.7 L357.0,361.8 L358.0,362.1 L359.0,364.1 L360.0,363.4 L361.0,362.1 L362.0,363.1 L363.0,358.8 L364.0,364.7 L365.0,362.0 L366.0,361.4 L367.0,360.5 L368.0,360.3 L369.0,361.2 L370.0,360.5 L371.0,361.7 L372.0,364.7 L373.0,362.6 L374.0,362.5 L375.0,361.8 L376.0,362.1 L377.0,364.6 L378.0,364.3 L379.0,363.3 L380.0,363.2 L381.0,365.8 L382.0,359.5 L383.0,365.7 L384.0,364.9 L385.0,363.5 L386.0,362.5 L387.0,367.8 L388.0,368.0 L389.0,363.0 L390.0,366.4 L391.0,368.2 L392.0,368.1 L393.0,361.2 L394.0,365.5 L395.0,365.3 L396.0,365.3 L397.0,366.3 L398.0,363.7 L399.0,361.5 L400.0,360.8 L401.0,364.6 L402.0,363.3 L403.0,359.4 L404.0,363.1 L405.0,361.2 L406.0,365.3 L407.0,363.1 L408.0,362.3 L409.0,362.3 L410.0,363.4 L411.0,361.1 L412.0,362.1 L413.0,360.1 L414.0,363.1 L415.0,362.8 L416.0,360.7 L417.0,363.7 L418.0,360.8 L419.0,361.5 L420.0,361.3 L421.0,360.5 L422.0,362.4 L423.0,359.4 L424.0,360.5 L425.0,358.6 L426.0,360.0 L427.0,358.8 L428.0,357.1 L429.0,357.7 L430.0,357.9 L431.0,359.8 L432.0,358.8 L433.0,357.1 L434.0,357.0 L435.0,358.4 L436.0,356.1 L437.0,356.1 L438.0,356.7 L439.0,356.7 L440.0,354.6 L441.0,353.1 L442.0,358.2 L443.0,356.3 L444.0,351.7 L445.0,352.7 L446.0,354.0 L447.0,354.8 L448.0,350.8 L449.0,350.6 L450.0,351.1 L451.0,355.9 L452.0,354.5 L453.0,353.4" fill="none" stroke="#ff00ff" stroke-width="1.3" shape-rendering="crispEdges"/>
<g font-family="Liberation Sans, sans-serif" font-size="12.5" fill="#000"><text transform="translate(41.2,136) scale(0.87,1)" text-anchor="end">200</text><text transform="translate(41.2,163) scale(0.87,1)" text-anchor="end">160</text><text transform="translate(41.2,190) scale(0.87,1)" text-anchor="end">120</text><text transform="translate(41.2,216) scale(0.87,1)" text-anchor="end">80</text><text transform="translate(41.2,243) scale(0.87,1)" text-anchor="end">40</text><text transform="translate(41.2,298) scale(0.87,1)" text-anchor="end">10</text><text transform="translate(41.2,325) scale(0.87,1)" text-anchor="end">8</text><text transform="translate(41.2,352) scale(0.87,1)" text-anchor="end">6</text><text transform="translate(41.2,378) scale(0.87,1)" text-anchor="end">4</text><text transform="translate(41.2,405) scale(0.87,1)" text-anchor="end">2</text><text transform="translate(470.5,255) scale(0.87,1)" text-anchor="start">2</text><text transform="translate(470.5,240) scale(0.87,1)" text-anchor="start">4</text><text transform="translate(470.5,225) scale(0.87,1)" text-anchor="start">6</text><text transform="translate(470.5,210) scale(0.87,1)" text-anchor="start">8</text><text transform="translate(470.5,195) scale(0.87,1)" text-anchor="start">10</text><text transform="translate(470.5,180) scale(0.87,1)" text-anchor="start">12</text><text transform="translate(470.5,166) scale(0.87,1)" text-anchor="start">14</text><text transform="translate(470.5,151) scale(0.87,1)" text-anchor="start">16</text><text transform="translate(470.5,136) scale(0.87,1)" text-anchor="start">18</text><text transform="translate(470.5,405) scale(0.87,1)" text-anchor="start">4</text><text transform="translate(470.5,378) scale(0.87,1)" text-anchor="start">8</text><text transform="translate(470.5,351) scale(0.87,1)" text-anchor="start">12</text><text transform="translate(470.5,325) scale(0.87,1)" text-anchor="start">16</text><text transform="translate(470.5,298) scale(0.87,1)" text-anchor="start">20</text><text transform="translate(50.0,280) scale(0.87,1)" text-anchor="middle">0.0</text><text transform="translate(50.0,442) scale(0.87,1)" text-anchor="middle">0.0</text><text transform="translate(96.0,280) scale(0.87,1)" text-anchor="middle">0.5</text><text transform="translate(96.0,442) scale(0.87,1)" text-anchor="middle">0.5</text><text transform="translate(142.0,280) scale(0.87,1)" text-anchor="middle">1.0</text><text transform="translate(142.0,442) scale(0.87,1)" text-anchor="middle">1.0</text><text transform="translate(189.0,280) scale(0.87,1)" text-anchor="middle">1.5</text><text transform="translate(189.0,442) scale(0.87,1)" text-anchor="middle">1.5</text><text transform="translate(235.0,280) scale(0.87,1)" text-anchor="middle">2.0</text><text transform="translate(235.0,442) scale(0.87,1)" text-anchor="middle">2.0</text><text transform="translate(282.0,280) scale(0.87,1)" text-anchor="middle">2.5</text><text transform="translate(282.0,442) scale(0.87,1)" text-anchor="middle">2.5</text><text transform="translate(328.0,280) scale(0.87,1)" text-anchor="middle">3.0</text><text transform="translate(328.0,442) scale(0.87,1)" text-anchor="middle">3.0</text><text transform="translate(375.0,280) scale(0.87,1)" text-anchor="middle">3.5</text><text transform="translate(375.0,442) scale(0.87,1)" text-anchor="middle">3.5</text><text transform="translate(421.0,280) scale(0.87,1)" text-anchor="middle">4.0</text><text transform="translate(421.0,442) scale(0.87,1)" text-anchor="middle">4.0</text><text transform="translate(468.0,280) scale(0.87,1)" text-anchor="middle">4.5</text><text transform="translate(468.0,442) scale(0.87,1)" text-anchor="middle">4.5</text></g>
</svg>
<!-- Disc info -->
<div class="gb" style="left:491px;top:126px;width:139px;height:83px;"></div>
<div class="lg" style="left:498px;top:122px;padding:0 2px;">Disc info</div>
<div class="t" style="left:499px;top:136px;">Type:</div><div class="t v" style="left:545px;top:136px;">DVD-R</div>
<div class="t" style="left:499px;top:153px;">ID:</div><div class="t v" style="left:545px;top:153px;">OPTODISCR016</div>
<div class="t" style="left:499px;top:171px;">Date:</div><div class="t v" style="left:545.5px;top:171px;letter-spacing:0.6px;">n/a</div>
<div class="t" style="left:499px;top:189px;">Label:</div><div class="t v" style="left:545.5px;top:189px;letter-spacing:0.6px;">n/a</div>
<!-- Settings -->
<div class="gb" style="left:491px;top:217px;width:139px;height:204px;"></div>
<div class="lg" style="left:498px;top:213px;padding:0 2px;">Settings</div>
<div class="t" style="left:499px;top:227px;">Speed:</div>
<div class="a sunken" style="left:500px;top:242px;width:83px;height:21px;"></div>
<div class="t" style="left:505px;top:247px;">8 X</div>
<div class="a raised" style="left:566px;top:244px;width:16px;height:17px;"></div>
<svg class="a" style="left:570px;top:250px" width="8" height="5"><path d="M0.5 0.5 L7.5 0.5 L4 4.5Z" fill="#000"/></svg>
<div class="a raised" style="left:592px;top:240px;width:23px;height:23px;"></div>
<svg class="a" style="left:596px;top:244px" width="15" height="15" viewBox="0 0 15 15"><rect x="0.5" y="0.5" width="13" height="14" fill="#fff" stroke="#000"/><g fill="none" stroke="#109010" stroke-width="1.6"><path d="M4 8 C4 5 5.5 4 7.5 4"/><path d="M10 7 C10 10 8.5 11 6.5 11"/></g><path d="M7.2 1.6 L10.4 4 L7.2 6.4Z M6.8 8.6 L3.6 11 L6.8 13.4Z" fill="#109010"/></svg>
<div class="t" style="left:502px;top:274px;">Start:</div>
<div class="a sunken" style="left:554px;top:268px;width:60px;height:20px;"></div>
<div class="t" style="left:557px;top:272px;">0000 MB</div>
<div class="t" style="left:502px;top:296px;">End:</div>
<div class="a sunken" style="left:554px;top:291px;width:60px;height:20px;"></div>
<div class="t" style="left:557px;top:295px;">4480 MB</div>
<div class="cb" style="left:502px;top:316px;"></div><div class="t" style="left:521px;top:317px;">Quick scan</div>
<div class="cb ck" style="left:502px;top:337px;"></div><div class="t" style="left:521px;top:338px;">Show C1/PIE</div>
<div class="cb ck" style="left:502px;top:353px;"></div><div class="t" style="left:521px;top:354px;">Show C2/PIF</div>
<div class="cb ck" style="left:502px;top:370px;"></div><div class="t" style="left:521px;top:371px;">Show jitter</div>
<div class="cb ck" style="left:502px;top:386px;"></div><div class="t" style="left:521px;top:387px;">Show read speed</div>
<div class="cb ck" style="left:502px;top:402px;background:#d4d0c8;"></div><div class="t" style="left:521px;top:403px;color:#808080;text-shadow:1px 1px 0 #fff;">Show write speed</div>
<svg class="a" style="left:502px;top:337px" width="13" height="80" viewBox="0 0 13 80" shape-rendering="crispEdges"><rect x="3" y="5" width="1" height="3" fill="#000"/><rect x="4" y="6" width="1" height="3" fill="#000"/><rect x="5" y="7" width="1" height="3" fill="#000"/><rect x="6" y="6" width="1" height="3" fill="#000"/><rect x="7" y="5" width="1" height="3" fill="#000"/><rect x="8" y="4" width="1" height="3" fill="#000"/><rect x="9" y="3" width="1" height="3" fill="#000"/><rect x="3" y="21" width="1" height="3" fill="#000"/><rect x="4" y="22" width="1" height="3" fill="#000"/><rect x="5" y="23" width="1" height="3" fill="#000"/><rect x="6" y="22" width="1" height="3" fill="#000"/><rect x="7" y="21" width="1" height="3" fill="#000"/><rect x="8" y="20" width="1" height="3" fill="#000"/><rect x="9" y="19" width="1" height="3" fill="#000"/><rect x="3" y="38" width="1" height="3" fill="#000"/><rect x="4" y="39" width="1" height="3" fill="#000"/><rect x="5" y="40" width="1" height="3" fill="#000"/><rect x="6" y="39" width="1" height="3" fill="#000"/><rect x="7" y="38" width="1" height="3" fill="#000"/><rect x="8" y="37" width="1" height="3" fill="#000"/><rect x="9" y="36" width="1" height="3" fill="#000"/><rect x="3" y="54" width="1" height="3" fill="#000"/><rect x="4" y="55" width="1" height="3" fill="#000"/><rect x="5" y="56" width="1" height="3" fill="#000"/><rect x="6" y="55" width="1" height="3" fill="#000"/><rect x="7" y="54" width="1" height="3" fill="#000"/><rect x="8" y="53" width="1" height="3" fill="#000"/><rect x="9" y="52" width="1" height="3" fill="#000"/><rect x="3" y="70" width="1" height="3" fill="#808080"/><rect x="4" y="71" width="1" height="3" fill="#808080"/><rect x="5" y="72" width="1" height="3" fill="#808080"/><rect x="6" y="71" width="1" height="3" fill="#808080"/><rect x="7" y="70" width="1" height="3" fill="#808080"/><rect x="8" y="69" width="1" height="3" fill="#808080"/><rect x="9" y="68" width="1" height="3" fill="#808080"/></svg>
<!-- Quality -->
<div class="gb" style="left:491px;top:427px;width:139px;height:26px;"></div>
<div class="t" style="left:502px;top:435px;letter-spacing:-0.29px;">Quality score:</div><div class="t v r" style="left:571px;top:435px;width:50px;">95</div>
<!-- Progress -->
<div class="gb" style="left:491px;top:459px;width:139px;height:56px;"></div>
<div class="a" style="left:577px;top:466px;width:38px;height:38px;box-sizing:border-box;border-radius:50%;border:1px solid rgba(130,128,124,.55);background:conic-gradient(from 20deg,rgba(255,255,255,.55),rgba(150,148,144,.35) 22%,rgba(235,233,228,.45) 40%,rgba(255,255,255,.6) 52%,rgba(150,148,144,.35) 74%,rgba(235,233,228,.45) 90%,rgba(255,255,255,.55));"></div>
<div class="a" style="left:590px;top:479px;width:12px;height:12px;box-sizing:border-box;border-radius:50%;border:1.5px solid rgba(240,238,234,.8);background:#d4d0c8;"></div>
<div class="a" style="left:593.5px;top:482.5px;width:5px;height:5px;box-sizing:border-box;border-radius:50%;border:1px solid rgba(150,148,144,.6);"></div>
<div class="t" style="left:502px;top:469px;letter-spacing:-0.41px;">Progress:</div><div class="t v r" style="left:561px;top:469px;width:60px;">100 %</div>
<div class="t" style="left:502px;top:485px;letter-spacing:-0.3px;">Position:</div><div class="t v r" style="left:561px;top:485px;width:60px;">4479 MB</div>
<div class="t" style="left:502px;top:500px;">Speed:</div><div class="t v r" style="left:561px;top:500px;width:60px;">8.34 X</div>
<!-- PI Errors -->
<div class="gb" style="left:14px;top:459px;width:146px;height:57px;"></div>
<div class="lg" style="left:22px;top:454px;padding:0 2px 0 15px;letter-spacing:-0.45px;">PI Errors</div><div class="sq" style="left:24px;top:456px;background:#00ffff;"></div>
<div class="t" style="left:22px;top:470px;">Average:</div><div class="t v r" style="left:90px;top:470px;width:60px;">57.20</div>
<div class="t" style="left:22px;top:485px;letter-spacing:-0.55px;">Maximum:</div><div class="t v r" style="left:90px;top:485px;width:60px;">164</div>
<div class="t" style="left:22px;top:500px;letter-spacing:0px;">Total:</div><div class="t v r" style="left:90px;top:500px;width:60px;">857642</div>
<!-- PI Failures -->
<div class="gb" style="left:172px;top:459px;width:146px;height:57px;"></div>
<div class="lg" style="left:180px;top:454px;padding:0 2px 0 15px;letter-spacing:-0.42px;">PI Failures</div><div class="sq" style="left:182px;top:456px;background:#ffff00;"></div>
<div class="t" style="left:181px;top:470px;">Average:</div><div class="t v r" style="left:249px;top:470px;width:60px;">0.21</div>
<div class="t" style="left:181px;top:485px;letter-spacing:-0.55px;">Maximum:</div><div class="t v r" style="left:249px;top:485px;width:60px;">9</div>
<div class="t" style="left:181px;top:500px;letter-spacing:0px;">Total:</div><div class="t v r" style="left:249px;top:500px;width:60px;">2596</div>
<!-- Jitter -->
<div class="gb" style="left:331px;top:459px;width:147px;height:43px;"></div>
<div class="lg" style="left:339px;top:454px;padding:0 2px 0 14px;">Jitter</div><div class="sq" style="left:341px;top:456px;background:#ff00ff;"></div>
<div class="t" style="left:340px;top:470px;">Average:</div><div class="t v r" style="left:408px;top:470px;width:60px;">9.09 %</div>
<div class="t" style="left:340px;top:485px;letter-spacing:-0.55px;">Maximum:</div><div class="t v r" style="left:408px;top:485px;width:60px;">11.5 %</div>
<div class="t" style="left:340px;top:504px;letter-spacing:-0.33px;">PO failures:</div><div class="t v r" style="left:408px;top:504px;width:60px;">0</div>
<div class="a" style="left:556px;top:506px;z-index:9;font-weight:bold;font-size:18px;line-height:18px;color:rgba(255,255,255,.3);white-space:nowrap;transform-origin:0 0;transform:scaleX(0.64);letter-spacing:0px;">CDRLABS.COM</div>
</body></html>
